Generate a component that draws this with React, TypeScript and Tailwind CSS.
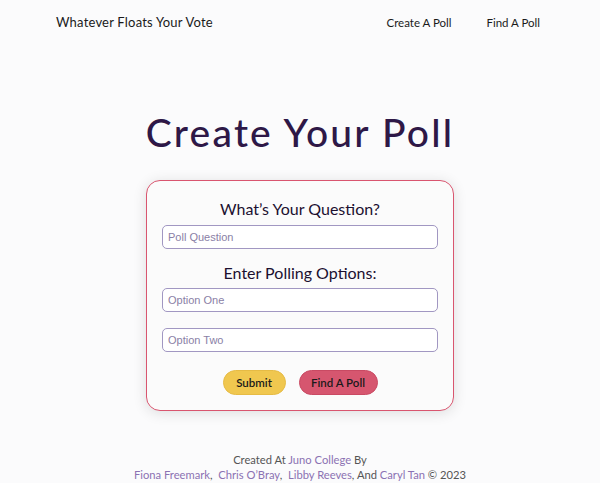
export default function App() {
  const font = { fontFamily: "Lato, 'Noto Sans', sans-serif" };
  const inputFont = { fontFamily: "'Liberation Sans', Arial, sans-serif" };
  const inputCls =
    "w-full h-[24px] rounded-[5px] border border-[#a197c2] bg-white px-[5px] text-[11px] placeholder:text-[#8a80a6] outline-none";
  return (
    <div className="min-h-[483px] bg-[#fbfbfc] text-[#1c1030] flex flex-col" style={font}>
      <nav className="flex items-center justify-between pl-[56px] pr-[60px] h-[46px] text-[#1a1a1a]">
        <span className="text-[13px] tracking-[0.2px]">Whatever Floats Your Vote</span>
        <div className="flex gap-[35px] text-[11.5px]">
          <a>Create A Poll</a>
          <a>Find A Poll</a>
        </div>
      </nav>

      <main className="flex flex-col items-center">
        <h1 className="mt-[62px] text-[39px] leading-[48px] font-medium tracking-[2.2px] text-[#2e1847]">Create Your Poll</h1>

        <form className="mt-[24px] w-[308px] h-[231px] rounded-[14px] border-[1.5px] border-[#d9556f] bg-[#fbfbfb] shadow-[0_2px_14px_rgba(0,0,0,0.12)] flex flex-col items-center px-[15px]">
          <h2 className="mt-[18px] text-[16px] leading-[20px] text-[#1c1030]">What’s Your Question?</h2>
          <input placeholder="Poll Question" className={`mt-[6px] ${inputCls}`} style={inputFont} />
          <h2 className="mt-[14px] text-[16px] leading-[20px] text-[#1c1030]">Enter Polling Options:</h2>
          <input placeholder="Option One" className={`mt-[5px] ${inputCls}`} style={inputFont} />
          <input placeholder="Option Two" className={`mt-[16px] ${inputCls}`} style={inputFont} />
          <div className="mt-[18px] flex gap-[13px]">
            <button type="button" className="w-[63px] h-[25px] rounded-full bg-[#f0c74f] border border-[#e6bb45] text-[11.5px] font-semibold text-[#1a1a1a]">Submit</button>
            <button type="button" className="w-[79px] h-[25px] rounded-full bg-[#d6566f] border border-[#c94a63] text-[11.5px] font-semibold text-[#1a1a1a]">Find A Poll</button>
          </div>
        </form>
      </main>

      <footer className="mt-[41px] text-center text-[11.2px] leading-[15px] text-[#555]">
        <p>Created At <a className="text-[#8b72b3]">Juno College</a> By</p>
        <p>
          <a className="text-[#8b72b3]">Fiona Freemark</a>,&nbsp; <a className="text-[#8b72b3]">Chris O’Bray</a>,&nbsp; <a className="text-[#8b72b3]">Libby Reeves</a>, And <a className="text-[#8b72b3]">Caryl Tan</a> © 2023
        </p>
      </footer>
    </div>
  );
}
